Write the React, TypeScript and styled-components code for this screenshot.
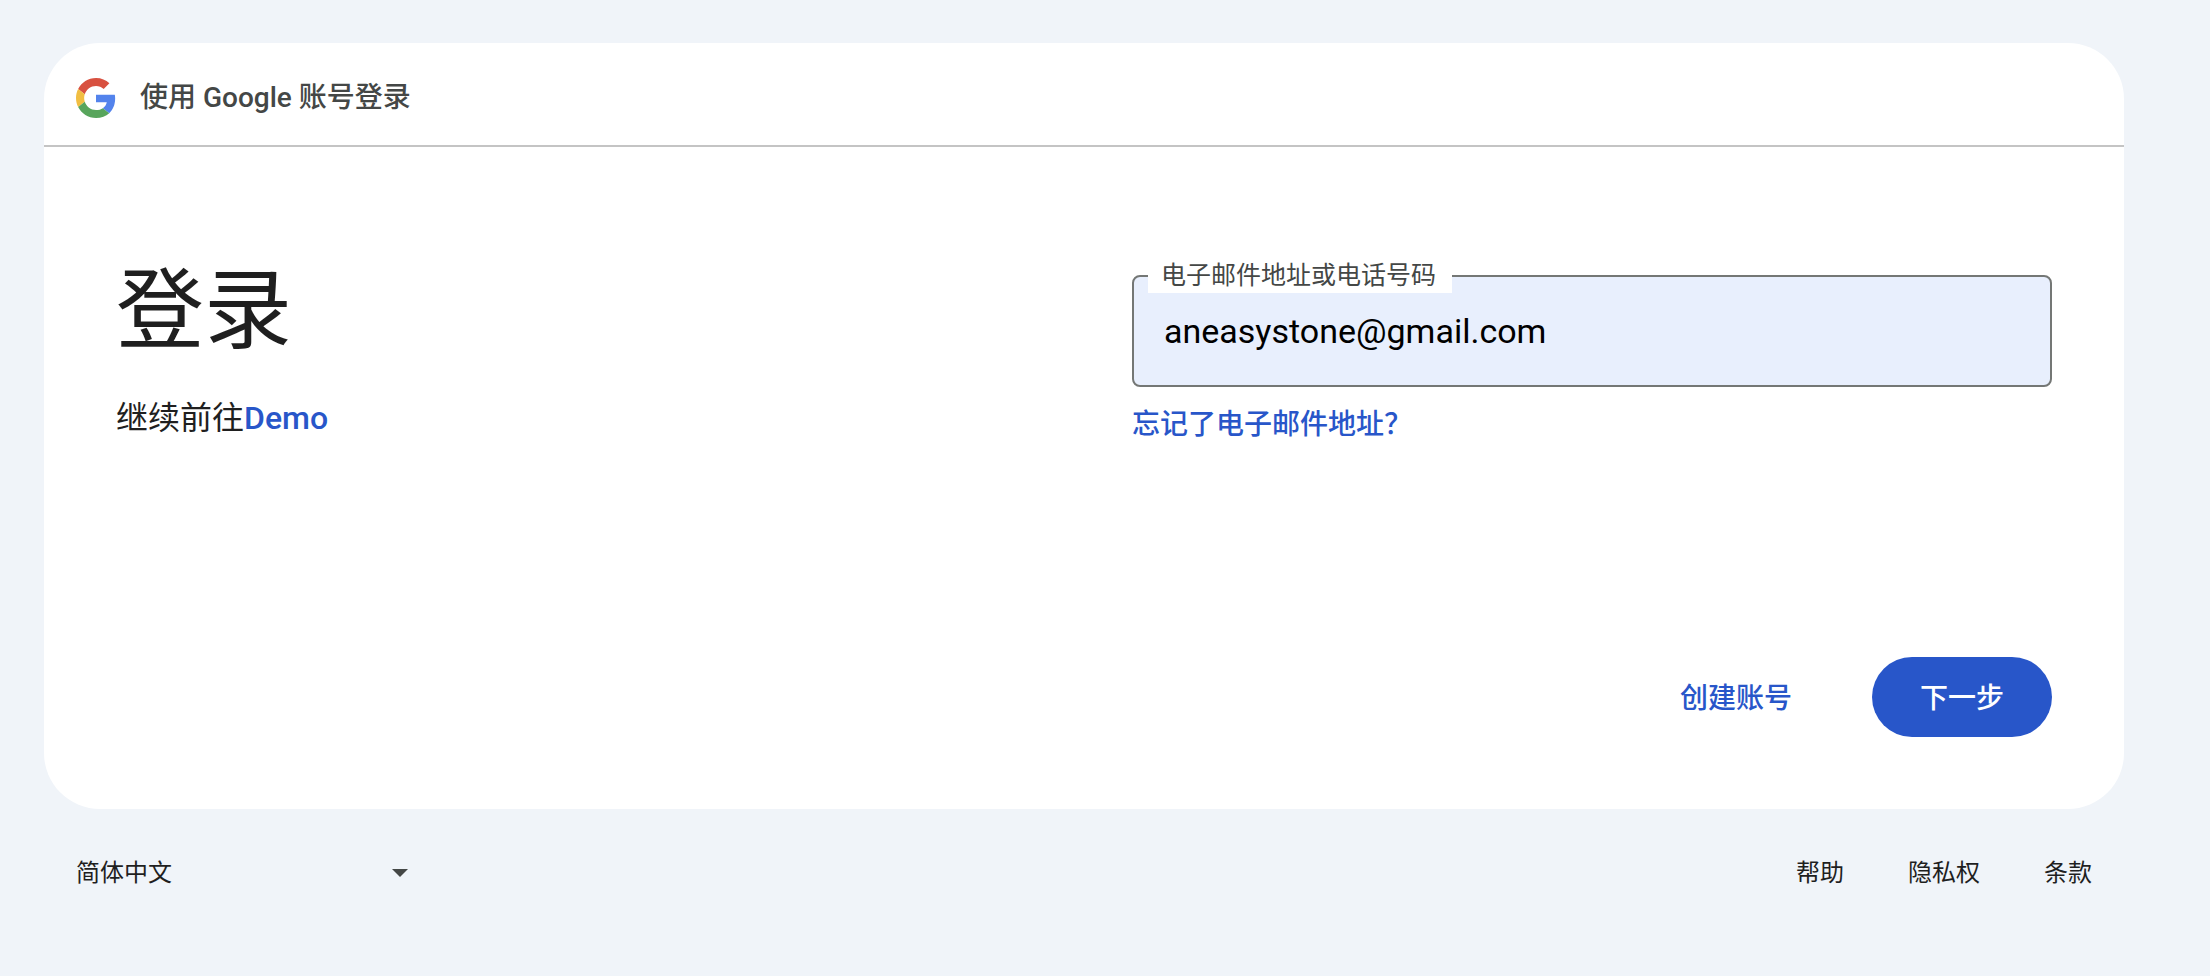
import React, { useState } from "react";
import styled, { createGlobalStyle } from "styled-components";

const color = {
  page: "#f0f4f9",
  surface: "#ffffff",
  text: "#1f1f1f",
  muted: "#444746",
  primary: "#2856c9",
  divider: "#c4c4c4",
  outline: "#747775",
  autofill: "#e8effd",
};

const GlobalStyle = createGlobalStyle`
  *, *::before, *::after { box-sizing: border-box; }
  body {
    margin: 0;
    background: ${color.page};
    color: ${color.text};
    font-family: Roboto, "Noto Sans CJK SC", sans-serif;
  }
  button, input, select { font: inherit; }
`;

const Page = styled.div`
  min-height: 100vh;
  padding: 43px 86px 40px 44px;
`;

const Card = styled.main`
  display: flex;
  flex-direction: column;
  background: ${color.surface};
  border-radius: 56px;
  overflow: hidden;
`;

const Header = styled.header`
  display: flex;
  align-items: center;
  gap: 24px;
  height: 104px;
  padding: 8px 32px 0;
  border-bottom: 2px solid ${color.divider};
`;

const HeaderTitle = styled.div`
  font-size: 28px;
  line-height: 40px;
  font-weight: 500;
  color: ${color.muted};
`;

const Body = styled.div`
  display: grid;
  grid-template-columns: 1fr 1fr;
  column-gap: 96px;
  padding: 104px 72px 0;
`;

const Intro = styled.div`
  padding-top: 4px;
`;

const Heading = styled.h1`
  margin: 0;
  font-size: 88px;
  line-height: 112px;
  font-weight: 400;
`;

const Subtitle = styled.p`
  margin: 27px 0 0;
  font-size: 32px;
  line-height: 48px;
`;

const TextLink = styled.a`
  color: ${color.primary};
  font-weight: 500;
  text-decoration: none;
`;

const FormColumn = styled.div`
  display: flex;
  flex-direction: column;
  align-items: flex-start;
  padding-top: 24px;
`;

const Field = styled.div`
  position: relative;
  width: 100%;
`;

const FieldInput = styled.input`
  display: block;
  width: 100%;
  height: 112px;
  padding: 0 30px;
  border: 2px solid ${color.outline};
  border-radius: 8px;
  background: ${color.autofill};
  color: #000000;
  font-size: 34px;
  outline: none;
`;

const FieldLabel = styled.label`
  position: absolute;
  top: -18px;
  left: 16px;
  padding: 2px 16px 0 13px;
  background: ${color.surface};
  color: ${color.muted};
  font-size: 25px;
  line-height: 34px;
`;

const ForgotRow = styled.div`
  margin-top: 18px;
  font-size: 28px;
  line-height: 40px;
`;

const Actions = styled.div`
  display: flex;
  justify-content: flex-end;
  gap: 32px;
  padding: 212px 72px 72px;
`;

const ActionButton = styled.button<{ $filled?: boolean }>`
  height: 80px;
  padding: 0 48px 3px;
  border: 0;
  border-radius: 40px;
  background: ${(p) => (p.$filled ? color.primary : "transparent")};
  color: ${(p) => (p.$filled ? color.surface : color.primary)};
  font-size: 28px;
  font-weight: 500;
  cursor: pointer;
`;

const Footer = styled.footer`
  display: flex;
  align-items: center;
  justify-content: space-between;
  padding: 44px 32px 0;
  font-size: 24px;
  line-height: 40px;
`;

const LanguagePicker = styled.div`
  display: grid;
  align-items: center;
  width: 348px;
  > * { grid-area: 1 / 1; }
`;

const LanguageSelect = styled.select`
  width: 100%;
  height: 40px;
  padding: 0;
  border: 0;
  background: transparent;
  color: ${color.text};
  appearance: none;
`;

const Caret = styled.svg`
  justify-self: end;
  margin-right: 16px;
  pointer-events: none;
`;

const FooterNav = styled.nav`
  display: flex;
  gap: 64px;
`;

const FooterLink = styled.a`
  color: ${color.text};
  text-decoration: none;
`;

function GoogleLogo() {
  return (
    <svg width="40" height="40" viewBox="0 0 48 48" aria-hidden="true">
      <path fill="#d85140" d="M24 9.5c3.54 0 6.71 1.22 9.21 3.6l6.85-6.85C35.9 2.38 30.47 0 24 0 14.62 0 6.51 5.38 2.56 13.22l7.98 6.19C12.43 13.72 17.74 9.5 24 9.5z" />
      <path fill="#5383ec" d="M46.98 24.55c0-1.57-.15-3.09-.38-4.55H24v9.02h12.94c-.58 2.96-2.26 5.48-4.78 7.18l7.73 6c4.51-4.18 7.09-10.36 7.09-17.65z" />
      <path fill="#f1be42" d="M10.53 28.59c-.48-1.45-.76-2.99-.76-4.59s.27-3.14.76-4.59l-7.98-6.19C.92 16.46 0 20.12 0 24c0 3.88.92 7.54 2.56 10.78l7.97-6.19z" />
      <path fill="#58a55c" d="M24 48c6.48 0 11.93-2.13 15.89-5.81l-7.73-6c-2.15 1.45-4.92 2.3-8.16 2.3-6.26 0-11.57-4.22-13.47-9.91l-7.98 6.19C6.51 42.62 14.62 48 24 48z" />
    </svg>
  );
}

export default function App() {
  const [email, setEmail] = useState("aneasystone@gmail.com");

  return (
    <>
      <GlobalStyle />
      <Page>
        <Card>
          <Header>
            <GoogleLogo />
            <HeaderTitle>使用 Google 账号登录</HeaderTitle>
          </Header>
          <Body>
            <Intro>
              <Heading>登录</Heading>
              <Subtitle>
                继续前往<TextLink href="#demo">Demo</TextLink>
              </Subtitle>
            </Intro>
            <FormColumn>
              <Field>
                <FieldInput
                  id="identifier"
                  type="email"
                  value={email}
                  spellCheck={false}
                  onChange={(e) => setEmail(e.target.value)}
                />
                <FieldLabel htmlFor="identifier">电子邮件地址或电话号码</FieldLabel>
              </Field>
              <ForgotRow>
                <TextLink href="#forgot">忘记了电子邮件地址？</TextLink>
              </ForgotRow>
            </FormColumn>
          </Body>
          <Actions>
            <ActionButton type="button">创建账号</ActionButton>
            <ActionButton type="button" $filled>下一步</ActionButton>
          </Actions>
        </Card>
        <Footer>
          <LanguagePicker>
            <LanguageSelect aria-label="语言" defaultValue="zh-CN">
              <option value="zh-CN">简体中文</option>
            </LanguageSelect>
            <Caret width="16" height="8" viewBox="0 0 16 8" aria-hidden="true">
              <path d="M0 0h16L8 8z" fill={color.muted} />
            </Caret>
          </LanguagePicker>
          <FooterNav>
            <FooterLink href="#help">帮助</FooterLink>
            <FooterLink href="#privacy">隐私权</FooterLink>
            <FooterLink href="#terms">条款</FooterLink>
          </FooterNav>
        </Footer>
      </Page>
    </>
  );
}
